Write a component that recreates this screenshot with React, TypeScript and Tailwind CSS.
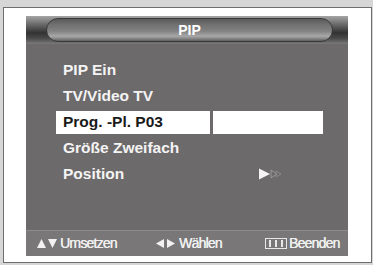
import React from "react";

const font = { fontFamily: '"Liberation Sans", Arial, sans-serif' };

function UpDown() {
  return (
    <svg width="20" height="11" viewBox="0 0 20 11" className="mr-[3px]">
      <polygon points="0,10 4.5,1 9,10" fill="#f2f2f2" />
      <polygon points="11,1 20,1 15.5,10" fill="#f2f2f2" />
    </svg>
  );
}

function LeftRight() {
  return (
    <svg width="21" height="11" viewBox="0 0 21 11" className="mr-[3px]">
      <polygon points="9,1 9,10 1,5.5" fill="#f2f2f2" />
      <polygon points="12,1 12,10 20,5.5" fill="#f2f2f2" />
    </svg>
  );
}

function MenuIcon() {
  return (
    <svg width="22" height="11" viewBox="0 0 22 11" className="mr-[2px]">
      <rect x="0.5" y="0.5" width="21" height="10" fill="none" stroke="#e8e8e8" strokeWidth="1" />
      <rect x="4" y="2" width="2" height="7" fill="#e8e8e8" />
      <rect x="10" y="2" width="2" height="7" fill="#e8e8e8" />
      <rect x="16" y="2" width="2" height="7" fill="#e8e8e8" />
    </svg>
  );
}

function PosArrow() {
  return (
    <svg width="26" height="12" viewBox="0 0 26 12">
      <polygon points="0,0.5 0,11.5 11,6" fill="#f4f4f4" />
      <polygon points="12,2 12,10 18,6" fill="none" stroke="#9a9798" strokeWidth="1" />
      <polygon points="17,3 17,9 22,6" fill="none" stroke="#8a8788" strokeWidth="1" />
    </svg>
  );
}

export default function App() {
  return (
    <div className="w-[373px] h-[265px] bg-[#d6d6d6] pt-[7px] pl-[3px] pr-[1px] overflow-hidden" style={font}>
      <div className="h-[256px] border border-[#6e6e6e] bg-white pt-[8px] pl-[22px]">
        <div className="w-[322px] h-[240px] flex flex-col">
          {/* header */}
          <div className="h-[28px] flex items-center pl-[20px] pr-[15px] bg-[linear-gradient(to_bottom,#a5a5a5_0%,#6a6a6a_30%,#333333_60%,#4a4a4a_80%,#7a7a7a_100%)]">
            <div className="flex-1 h-[24px] rounded-full border border-[#3a3a3a] flex items-center justify-center bg-[linear-gradient(to_bottom,#5a5a5a_0%,#707070_25%,#828282_55%,#a8a8a8_78%,#8a8a8a_88%,#5e5e5e_100%)]">
              <span className="text-[14px] font-bold text-white leading-none">PIP</span>
            </div>
          </div>
          {/* body */}
          <div className="h-[186px] bg-[#6d6a6b] pt-[13px] pl-[30px] text-[15.5px] font-bold text-[#f4f4f4]">
            <div className="h-[26px] flex items-center pl-[7px]">PIP Ein</div>
            <div className="h-[26px] flex items-center pl-[7px]">TV/Video TV</div>
            <div className="h-[26px] flex items-center gap-[3px]">
              <div className="w-[154px] h-[23px] bg-white flex items-center pl-[7px] text-[#1a1a1a]">Prog. -Pl. P03</div>
              <div className="w-[110px] h-[23px] bg-white"></div>
            </div>
            <div className="h-[26px] flex items-center pl-[7px]">Größe Zweifach</div>
            <div className="h-[26px] flex items-center pl-[7px]">
              <span className="w-[196px]">Position</span>
              <PosArrow />
            </div>
          </div>
          {/* footer */}
          <div className="h-[26px] bg-[#7a7778] border-t border-[#8e8b8c] flex items-center pl-[11px] text-[14px] tracking-[-0.8px] text-[#f0f0f0] [text-shadow:0.3px_0_0_#f0f0f0]">
            <div className="w-[118px] flex items-center">
              <UpDown />
              <span>Umsetzen</span>
            </div>
            <div className="w-[110px] flex items-center">
              <LeftRight />
              <span>Wählen</span>
            </div>
            <div className="flex items-center">
              <MenuIcon />
              <span>Beenden</span>
            </div>
          </div>
        </div>
      </div>
    </div>
  );
}
